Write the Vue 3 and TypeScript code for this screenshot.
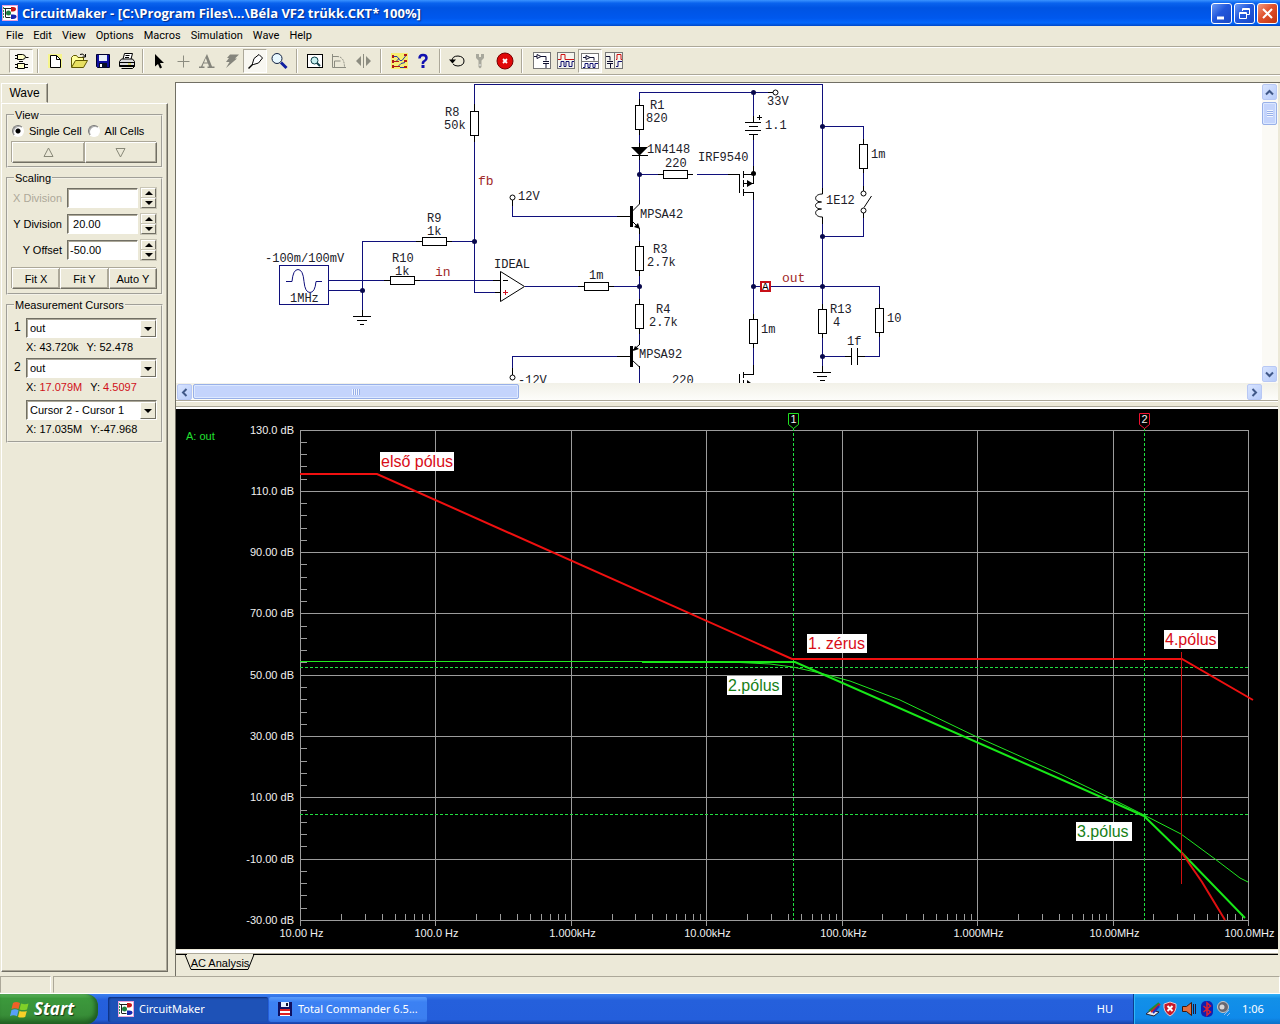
<script setup lang="ts">
import { ref } from 'vue'

interface ToolButton { name: string; title: string; pressed?: boolean }
interface Label { x: number; y: number; text: string }

const menus = ['File', 'Edit', 'View', 'Options', 'Macros', 'Simulation', 'Wave', 'Help']

const logo = `<rect x="0.5" y="0.5" width="15" height="15" fill="#fff" stroke="#e9a0d8"/>
<path d="M1 3.500h8M3.500 3v9M3.500 12.500h5" stroke="#222" fill="none"/>
<path d="M1.500 2v12" stroke="#28a060" stroke-dasharray="2 1"/>
<path d="M9 2h2q3 0 3 2t-3 2.500h-2z" fill="#c81818"/><circle cx="6.500" cy="8" r="2.500" fill="#208040"/>
<path d="M9 9.500h2q3.500 0 3.500 2t-3.500 2.500h-2z" fill="#1828b0"/>`

const icons: Record<string, string> = {
  gates: `<path d="M6.500 3.500h5q3 .5 3 2.500t-3 2.500h-5zM6.500 12.500h7v5h-7z" fill="#ffffc8" stroke="#000"/><path d="M4 4.500h2M4 7.500h2M15 6.500h2.500M4 13.500h2M4 16.500h2M14 13.500h3M14 16.500h3M8 10.500h4" stroke="#000"/>`,
  newFile: `<rect x="3" y="3" width="14" height="14" fill="#ffff50" opacity=".55"/><path d="M5.500 4.500h6l4 4v8h-10z" fill="#fff" stroke="#000"/><path d="M11.500 4.500v4h4" fill="none" stroke="#000"/>`,
  open: `<path d="M2.500 16V6.500l2-2h3l1.500 2h5.500v3" fill="#ffff9c" stroke="#605800"/><path d="M2.500 16.500l4-7h12l-4 7z" fill="#e8e060" stroke="#605800"/><path d="M11 3.500q3-2 5 2M16.500 3v3h-3" fill="none" stroke="#000"/>`,
  save: `<path d="M3.500 3.500h13v13h-12l-1-1z" fill="#1010a0" stroke="#000030"/><rect x="6" y="4" width="8" height="6" fill="#e8f0f8"/><rect x="6" y="12" width="8" height="4.500" fill="#081028"/><rect x="7" y="13" width="2" height="3" fill="#fff"/>`,
  print: `<path d="M6 8l1.500-5.500h8L14 8" fill="#fff" stroke="#000"/><path d="M8.500 4.500h4M8 6.500h4" stroke="#000"/><path d="M2.500 10.500l2-2.500h11l2 2.500v5h-15z" fill="#ddd" stroke="#000"/><path d="M2.500 11.500h15M3 14.500h14M4.500 17.500h11l2-2" fill="none" stroke="#000"/><path d="M11 13h3" stroke="#c8c800"/>`,
  arrow: `<path d="M6 3v12.500l3-2.500 2 4.500 2-1-2-4.500h4z" fill="#000"/>`,
  plus: `<path d="M10.500 4.500v12M4.500 10.500h12" stroke="#8c8c80"/>`,
  text: `<path d="M10 3l5 12.500h2.500v1.500h-7v-1.500h1.500l-1-3H6.500l-1 3h2v1.500H2v-1.500h2L9 5zM7 11.500h3.500L8.800 7z" fill="#85857c"/>`,
  bolt: `<path d="M9 3.500h9l-4 4h2L5 17l3.500-6H5l3-4H6z" fill="#85857c"/>`,
  probe: `<path d="M3.500 17.500l5-5" stroke="#000" stroke-width="1.500"/><path d="M7.500 12.500l1.500-5 5-4 3.500 3.500-4 5-5 1.500z" fill="#fff" stroke="#000"/>`,
  zoom: `<circle cx="8" cy="7.500" r="5" fill="#e8f8ff" stroke="#102040"/><path d="M12 11.500l5.500 5.500" stroke="#1020a0" stroke-width="3"/>`,
  fit: `<rect x="2.500" y="3.500" width="15" height="13" fill="#fff" stroke="#000"/><circle cx="9.500" cy="9.500" r="3.500" fill="#c8f0f0" stroke="#104048"/><path d="M12 12l3 3" stroke="#104048" stroke-width="2"/>`,
  rotate: `<path d="M3.500 3v13.500H17M3 5.500h5M5.500 16v-6h6" fill="none" stroke="#8c8c80"/><path d="M8 5.500q7 0 7.500 10" fill="none" stroke="#8c8c80" stroke-dasharray="2 1"/>`,
  mirror: `<path d="M10.500 3v14" stroke="#8c8c80"/><path d="M8 5v10l-5-5zM13 5v10l5-5z" fill="#8c8c80"/>`,
  net: `<rect x="2" y="2" width="17" height="16" fill="#fff230" opacity=".6"/><path d="M3 5.500h5l3 4h2l4-5M3 10.500h4l3-3M3 15.500h6l3-3 4-1M11 16.500h6" fill="none" stroke="#2838a8"/><path d="M3 4h2v3H3zM3 9h2v3H3zM3 14h2v3H3zM15 3h3v2h-3zM15 9h3v2h-3zM15 15h3v2h-3z" fill="#b01818"/><path d="M5 10.500l5 0M5 15.500h6" stroke="#b01818"/>`,
  help: `<path d="M6.500 7.500q0-3.500 3.500-3.500t3.500 3q0 2-2 3t-1.500 3" fill="none" stroke="#1010b0" stroke-width="2.500"/><rect x="8.500" y="14" width="3" height="3" fill="#1010b0"/>`,
  reset: `<path d="M5 10q0-5 6-5 6 .5 6 5t-6 5q-3.500 0-5-2" fill="none" stroke="#000"/><path d="M2 8.500h7l-3.500 4z" fill="#000"/>`,
  wrench: `<path d="M5 3h3v3h2V3h3v4l-2.500 2.500V16l-1.500 1.500L7.500 16V9.500L5 7z" fill="#a8a89c"/><path d="M8 14h2" stroke="#eee"/>`,
  stop: `<circle cx="10" cy="10" r="8" fill="#e00808" stroke="#700"/><path d="M8 8l4 4M12 8l-4 4" stroke="#fff" stroke-width="1.800"/>`,
  winA: `<rect x="1.500" y="1.500" width="17" height="16" fill="#fff" stroke="#777"/><path d="M2 5.500h3v-2l4 2-4 2v-2M9 5.500h5v4M11 10.500h6M11 12.500h6M14 13v4" fill="none" stroke="#101030"/>`,
  winB: `<rect x="1.500" y="1.500" width="17" height="16" fill="#f4f4ee" stroke="#777"/><path d="M2 8.500h3v-5h4v5h9" fill="none" stroke="#d01010"/><path d="M3 15.500h2v-5h3v5h2v-5h3v5h3v-5h2" fill="none" stroke="#101070"/>`,
  winC: `<rect x="1.500" y="2.500" width="17" height="15" fill="#fff" stroke="#777"/><path d="M2 10.500h16" stroke="#777"/><path d="M3 6.500h3v-2l4 2-4 2v-2M10 6.500h4v3" fill="none" stroke="#101030"/><path d="M3 16.500h2v-4h3v4h2v-4h3v4h2v-4h3" fill="none" stroke="#101070"/>`,
  winD: `<rect x="1.500" y="1.500" width="17" height="16" fill="#f4f4ee" stroke="#777"/><path d="M10.500 2v15" stroke="#777"/><path d="M2 5.500h4v4M3 10.500h6M3 12.500h6M6.500 13v4" fill="none" stroke="#101030"/><path d="M12 8.500h1v-5h4v5h1" fill="none" stroke="#d01010"/><path d="M12 15.500h2v-5h4" fill="none" stroke="#101070"/>`,
}

const toolGroups: ToolButton[][] = [
  [{ name: 'gates', title: 'Parts', pressed: true }],
  [{ name: 'newFile', title: 'New' }, { name: 'open', title: 'Open' }, { name: 'save', title: 'Save' }, { name: 'print', title: 'Print' }],
  [{ name: 'arrow', title: 'Arrow' }, { name: 'plus', title: 'Wire' }, { name: 'text', title: 'Text' }, { name: 'bolt', title: 'Delete' }, { name: 'probe', title: 'Probe', pressed: true }, { name: 'zoom', title: 'Zoom' }],
  [{ name: 'fit', title: 'Fit to window' }, { name: 'rotate', title: 'Rotate' }, { name: 'mirror', title: 'Mirror' }],
  [{ name: 'net', title: 'Connections' }, { name: 'help', title: 'Help' }],
  [{ name: 'reset', title: 'Reset' }, { name: 'wrench', title: 'Setup' }, { name: 'stop', title: 'Stop' }],
  [{ name: 'winA', title: 'Schematic' }, { name: 'winB', title: 'Waves' }, { name: 'winC', title: 'Split horizontally', pressed: true }, { name: 'winD', title: 'Split vertically' }],
]

const cellMode = ref('single')
const xDivision = ref('')
const yDivision = ref(' 20.00')
const yOffset = ref('-50.00')

// Schematic
const wires = [
  'M474.500 104V84.500H822.500V188', 'M474.500 142V292.500H495', 'M416 241.500H362.500V310', 'M452 241.500H474',
  'M328 280.500H384', 'M420 280.500H493', 'M328 290.500H362', 'M525 286.500H578', 'M614 286.500H639',
  'M512.500 206V216.500H617', 'M617 356.500H512.500V368', 'M639.500 99V92.500H768', 'M639.500 135V143',
  'M639.500 160V200', 'M639.500 174.500H658', 'M639.500 234V241', 'M639.500 276V299', 'M639.500 334V340',
  'M639.500 369V383', 'M697 174.500H728', 'M753.500 92V116', 'M753.500 140V166', 'M753.500 200V314',
  'M753.500 348V365', 'M753 286.500H760', 'M771 286.500H879.500V304', 'M822.500 126.500H863.500V139',
  'M863.500 173V186', 'M863.500 218V236.500H822', 'M822.500 224V304', 'M822.500 338V366', 'M822 356.500H845',
  'M865 356.500H879.500V337', 'M279.500 265.500H328.500V304.500H279.500Z',
]
const leads = [
  'M474.500 104V111M474.500 135V142', 'M416 241.500H422M447 241.500H452', 'M384 280.500H390M415 280.500H420',
  'M493 280.500H500M495 292.500H500', 'M578 286.500H584M609 286.500H614', 'M512.500 200V206M512.500 368V375',
  'M617 216.500H631M617 356.500H631', 'M639.500 99V105M639.500 129V135M639.500 143V148M639.500 155V160',
  'M632 155.500H648', 'M658 174.500H663M688 174.500H693M728 174.500H740', 'M639.500 200V204M639.500 228V234M639.500 241V246M639.500 270V276',
  'M639.500 299V304M639.500 328V334M639.500 340V345M639.500 366V369', 'M768 92.500H773', 'M753.500 116V122M753.500 134V140M753.500 166V173',
  'M745 122.500H761M749 126.500H758M745 130.500H761M749 134.500H758M757 117.500H762M759.500 115V120',
  'M739.500 174V193M743.500 171V178M743.500 180V187M743.500 189V196M743 174.500H753.500V183.500H743M743 192.500H753.500V200',
  'M739.500 374V383M743.500 372V378M743.500 380V383M743 374.500H753.500V365', 'M753.500 314V319M753.500 343V348',
  'M863.500 139V144M863.500 168V173M863.500 186V191M863.500 213V218', 'M822.500 188V194M822.500 217V224',
  'M822.500 304V309M822.500 333V338M822.500 366V372', 'M879.500 304V308M879.500 332V337', 'M845 356.500H851M858 356.500H865',
  'M851.500 348V365M857.500 348V365', 'M353 316.500H371M357 320.500H367M360 324.500H364M362.500 310V316',
  'M813 372.500H831M817 376.500H827M820 380.500H825', 'M503 280.500H508',
]
const uprights = [[470, 111], [635, 105], [635, 246], [635, 304], [749, 319], [859, 144], [818, 309], [875, 308]]
const flats = [[422, 237], [390, 276], [584, 282], [663, 170]]
const dots = [[474.5, 241.5], [362.5, 290.5], [639.5, 174.5], [639.5, 286.5], [753.5, 92.5], [753.5, 286.5], [822.5, 126.5], [822.5, 236.5], [822.5, 286.5], [822.5, 356.5]]
const terminals = [[512.5, 197.5], [512.5, 377.5], [775.5, 92.5], [863.5, 193.5], [863.5, 210.5]]
const label = (x: number, y: number, text: string): Label => ({ x, y, text })
const partLabels: Label[] = [
  label(445, 116, 'R8'), label(444, 129, '50k'), label(518, 200, '12V'), label(427, 222, 'R9'), label(427, 235, '1k'),
  label(265, 262, '-100m/100mV'), label(392, 262, 'R10'), label(395, 275, '1k'), label(494, 268, 'IDEAL'), label(290, 302, '1MHz'),
  label(518, 384, '-12V'), label(650, 109, 'R1'), label(646, 122, '820'), label(647, 153, '1N4148'), label(665, 167, '220'),
  label(698, 161, 'IRF9540'), label(767, 105, '33V'), label(765, 129, '1.1'), label(871, 158, '1m'), label(640, 218, 'MPSA42'),
  label(826, 204, '1E12'), label(653, 253, 'R3'), label(647, 266, '2.7k'), label(589, 279, '1m'), label(656, 313, 'R4'),
  label(649, 326, '2.7k'), label(761, 333, '1m'), label(830, 313, 'R13'), label(833, 326, '4'), label(847, 345, '1f'),
  label(887, 322, '10'), label(639, 358, 'MPSA92'), label(672, 384, '220'),
]
const netLabels: Label[] = [label(478, 185, 'fb'), label(435, 276, 'in'), label(782, 282, 'out')]

// Bode plot: seven decades across, 20 dB per division
const left = 300.5
const right = 1248.5
const top = 430
const bottom = 920.5
const decade = (right - left) / 7
const division = (bottom - top) / 8
const xLabels = ['10.00 Hz', '100.0 Hz', '1.000kHz', '10.00kHz', '100.0kHz', '1.000MHz', '10.00MHz', '100.0MHz']
const yLabels = ['130.0 dB', '110.0 dB', '90.00 dB', '70.00 dB', '50.00 dB', '30.00 dB', '10.00 dB', '-10.00 dB', '-30.00 dB']
const xAt = (i: number) => Math.floor(left + i * decade) + 0.5
const yAt = (i: number) => Math.floor(top + i * division) + 0.5
const logTicks: number[] = []
for (let d = 0; d < 7; d++) for (let m = 2; m < 10; m++) logTicks.push(xAt(d + Math.log10(m)))
const dbTicks: number[] = []
for (let i = 1; i < 40; i++) if (i % 5) dbTicks.push(yAt(i / 5))
const notes = [
  { x: 380, y: 452, w: 74, text: 'első pólus', color: '#d80c18' },
  { x: 807, y: 634, w: 60, text: '1. zérus', color: '#d80c18' },
  { x: 1164, y: 630, w: 54, text: '4.pólus', color: '#d80c18' },
  { x: 727, y: 676, w: 55, text: '2.pólus', color: '#178017' },
  { x: 1076, y: 822, w: 56, text: '3.pólus', color: '#178017' },
]
</script>

<template>
  <div class="desktop">
    <header class="title-bar">
      <svg class="logo" width="16" height="16" v-html="logo"></svg>
      <h1>CircuitMaker - [C:\Program Files\...\Béla VF2 trükk.CKT* 100%]</h1>
      <div class="window-buttons">
        <button aria-label="Minimize"><svg width="19" height="19"><path d="M5 14h7" stroke="#fff" stroke-width="3" /></svg></button>
        <button aria-label="Restore"><svg width="19" height="19" fill="none" stroke="#fff"><path d="M7.500 7V4.500h7v6H12M7 5.500h8M4.500 8.500h7v6h-7zM4 9.500h8" /></svg></button>
        <button class="close" aria-label="Close"><svg width="19" height="19"><path d="M5 5l9 9M14 5l-9 9" stroke="#fff" stroke-width="2" /></svg></button>
      </div>
    </header>

    <nav class="menu-bar"><button v-for="m in menus" :key="m">{{ m }}</button></nav>

    <div class="toolbar" role="toolbar">
      <div v-for="(group, g) in toolGroups" :key="g" class="tool-group">
        <button v-for="t in group" :key="t.name" :title="t.title" :aria-label="t.title" :class="{ pressed: t.pressed }">
          <svg width="20" height="20" v-html="icons[t.name]"></svg>
        </button>
      </div>
    </div>

    <main class="workspace">
      <aside class="sidebar">
        <button class="side-tab">Wave</button>
        <div class="side-page">
          <fieldset class="view-box">
            <legend>View</legend>
            <div class="radio-row">
              <label><input v-model="cellMode" type="radio" name="cells" value="single">Single Cell</label>
              <label><input v-model="cellMode" type="radio" name="cells" value="all">All Cells</label>
            </div>
            <div class="button-row">
              <button aria-label="Previous cell"><svg width="11" height="11"><path d="M5.500 1L10 9.500H1z" fill="none" stroke="#888878" /></svg></button>
              <button aria-label="Next cell"><svg width="11" height="11"><path d="M5.500 10L10 1.500H1z" fill="none" stroke="#888878" /></svg></button>
            </div>
          </fieldset>

          <fieldset class="scaling-box">
            <legend>Scaling</legend>
            <div class="field-row">
              <label for="xdiv" class="disabled">X Division</label><input id="xdiv" v-model="xDivision" type="text">
              <span class="spinner"><button aria-label="Increase X division"><i class="up"></i></button><button aria-label="Decrease X division"><i class="down"></i></button></span>
            </div>
            <div class="field-row">
              <label for="ydiv">Y Division</label><input id="ydiv" v-model="yDivision" type="text">
              <span class="spinner"><button aria-label="Increase Y division"><i class="up"></i></button><button aria-label="Decrease Y division"><i class="down"></i></button></span>
            </div>
            <div class="field-row">
              <label for="yoff">Y Offset</label><input id="yoff" v-model="yOffset" type="text">
              <span class="spinner"><button aria-label="Increase Y offset"><i class="up"></i></button><button aria-label="Decrease Y offset"><i class="down"></i></button></span>
            </div>
            <div class="button-row"><button>Fit X</button><button>Fit Y</button><button>Auto Y</button></div>
          </fieldset>

          <fieldset class="cursor-box">
            <legend>Measurement Cursors</legend>
            <div class="cursor-row">
              <label for="c1">1</label>
              <span class="combo"><select id="c1"><option>out</option></select><b><i class="down"></i></b></span>
            </div>
            <p class="reading"><span>X: 43.720k</span><span>Y: 52.478</span></p>
            <div class="cursor-row">
              <label for="c2">2</label>
              <span class="combo"><select id="c2"><option>out</option></select><b><i class="down"></i></b></span>
            </div>
            <p class="reading"><span>X: <em>17.079M</em></span><span>Y: <em>4.5097</em></span></p>
            <div class="cursor-row difference">
              <label for="c3"></label>
              <span class="combo"><select id="c3" aria-label="Difference"><option>Cursor 2 - Cursor 1</option></select><b><i class="down"></i></b></span>
            </div>
            <p class="reading"><span>X: 17.035M</span><span>Y:-47.968</span></p>
          </fieldset>
        </div>
      </aside>

      <section class="documents">
        <div class="schematic">
          <svg class="canvas" width="100%" height="300" fill="none" shape-rendering="crispEdges">
            <g transform="translate(-176 -83)">
              <path v-for="w in wires" :key="w" :d="w" stroke="#10107c" />
              <path v-for="l in leads" :key="l" :d="l" stroke="#000" />
              <rect v-for="([x, y], i) in uprights" :key="'u' + i" :x="x + 0.5" :y="y + 0.5" width="8" height="24" fill="#fff" stroke="#000" />
              <rect v-for="([x, y], i) in flats" :key="'f' + i" :x="x + 0.5" :y="y + 0.5" width="24" height="8" fill="#fff" stroke="#000" />
              <g shape-rendering="auto">
                <circle v-for="([x, y], i) in dots" :key="'d' + i" :cx="x" :cy="y" r="2.5" fill="#08084c" />
                <circle v-for="([x, y], i) in terminals" :key="'t' + i" :cx="x" :cy="y" r="2.5" fill="#fff" stroke="#000" />
                <circle cx="753.5" cy="173.500" r="2.5" fill="#000" />
                <path d="M286 281.500h6q1-12 6-12t6 12q1 11 6 11t6-11h6" stroke="#10107c" />
                <path d="M500.500 271.500v30l24-15zM639.500 204l-7 7M632 221l7 7M639 345l-7 6M632 360l7.500 7M864 207.500l7.500-11.500" stroke="#000" />
                <path d="M822.500 194c-9 0-9 8-1 8c-8 0-8 7 0 7c-8 0-8 8 1 8" stroke="#000" />
                <path d="M631 147h17l-8.500 8.500zM640 229l-6-2 4-4zM633 351l2-5 4 3zM753 183.500l-6-3.500v7zM630 206h3v21h-3zM630 346h3v21h-3zM751 383l-4-3v3z" fill="#000" />
                <path d="M503 292.500h5M505.500 290v5" stroke="#d01020" />
                <rect x="761" y="282" width="9" height="9" fill="#fff" stroke="#c81018" stroke-width="2" />
              </g>
              <text x="762" y="290" class="probe-name">A</text>
              <text v-for="(p, i) in partLabels" :key="'p' + i" :x="p.x" :y="p.y" class="part">{{ p.text }}</text>
              <text v-for="n in netLabels" :key="n.text" :x="n.x" :y="n.y" class="net">{{ n.text }}</text>
            </g>
          </svg>
          <div class="v-scroll">
            <button aria-label="Scroll up"><svg width="9" height="7"><path d="M1 5.500L4.500 2 8 5.500" /></svg></button>
            <span class="thumb"><i></i></span>
            <button class="end" aria-label="Scroll down"><svg width="9" height="7"><path d="M1 1.500L4.500 5 8 1.500" /></svg></button>
          </div>
        </div>
        <div class="h-scroll">
          <button aria-label="Scroll left"><svg width="7" height="9"><path d="M5.500 1L2 4.500 5.500 8" /></svg></button>
          <span class="thumb"><i></i></span>
          <button class="end" aria-label="Scroll right"><svg width="7" height="9"><path d="M1.500 1L5 4.500 1.500 8" /></svg></button>
        </div>
        <div class="splitter"></div>

        <svg class="plot" viewBox="176 409 1102 540" fill="none">
          <g stroke="#9c9c9c" shape-rendering="crispEdges">
            <path v-for="(_, i) in xLabels" :key="'x' + i" :d="`M${xAt(i)} ${top}V${bottom + 5}`" />
            <path v-for="(_, i) in yLabels" :key="'y' + i" :d="`M${left} ${yAt(i)}H${right}`" />
            <path v-for="x in logTicks" :key="'l' + x" :d="`M${x} ${bottom - 7}V${bottom}`" />
            <path v-for="y in dbTicks" :key="'b' + y" :d="`M${left} ${y}h6`" />
          </g>
          <path d="M793.500 428V920M1144.500 428V920M300 667.500H1248M300 814.500H1248" stroke="#20e040" stroke-dasharray="3 2" shape-rendering="crispEdges" />
          <path d="M300 661.500H700L740 662.500 770 664 793 667 820 673 850 681 900 700 977 737 1060 774 1112 799 1144 815 1181 834 1215 859 1240 878 1248 882" stroke="#20e820" />
          <path d="M300 661.500H640" stroke="#20e820" />
          <path d="M642 662H795L1144 816" stroke="#18e818" stroke-width="2" />
          <path d="M1144 816L1182 853 1245 918" stroke="#18e818" stroke-width="2" />
          <path d="M300 474H377L792 659H1182L1253 700" stroke="#f01010" stroke-width="2" />
          <path d="M1182 853L1202 882 1225 920" stroke="#e01010" stroke-width="2" />
          <path d="M1181.500 652V884" stroke="#d01010" />
          <path d="M788.500 413.500h10v11l-5 4-5-4z" stroke="#20e020" fill="#000" />
          <path d="M1139.500 413.500h10v11l-5 4-5-4z" stroke="#f01030" fill="#000" />
          <g class="axis">
            <text x="793.5" y="423" text-anchor="middle">1</text>
            <text x="1144.5" y="423" text-anchor="middle">2</text>
            <text v-for="(t, i) in yLabels" :key="t" x="294" :y="yAt(i) + 3" text-anchor="end">{{ t }}</text>
            <text v-for="(t, i) in xLabels" :key="t" :x="xAt(i) + 1" y="937" text-anchor="middle">{{ t }}</text>
            <text x="186" y="440" class="signal">A: out</text>
          </g>
          <g v-for="n in notes" :key="n.text">
            <rect :x="n.x" :y="n.y" :width="n.w" height="19" fill="#fff" />
            <text :x="n.x + 1" :y="n.y + 15" class="note" :fill="n.color">{{ n.text }}</text>
          </g>
        </svg>

        <div class="sheet-tabs">
          <button>
            <svg width="72" height="17" fill="none"><path d="M3 0h66" stroke="#ece9d8" stroke-width="2" /><path d="M1 .5l6 15h57l6-15" stroke="#000" /></svg>
            <span>AC Analysis</span>
          </button>
        </div>
      </section>
    </main>

    <footer class="status-bar"><span></span><span></span></footer>

    <footer class="taskbar">
      <button class="start">
        <svg width="20" height="20"><path d="M3 4q3-2 7 0l-1.500 6q-4-1.500-7 0z" fill="#f06028" /><path d="M11 4.500q4 1.500 7.500 0L17 10.500q-4 1-7.500 0z" fill="#80d028" /><path d="M1.500 11q4-1.500 7 .3L7 17.300q-4-2-7 0z" fill="#58a0f8" /><path d="M9.500 12q4 1 7.300 0l-1.600 6q-4 1-7.200 0z" fill="#f8d028" /></svg>
        <span>Start</span>
      </button>
      <button class="task active"><svg width="16" height="16" v-html="logo"></svg>CircuitMaker</button>
      <button class="task"><svg width="16" height="16"><path d="M1 1h14v14H1z" fill="#101060" /><path d="M4 1h8v5H4z" fill="#e8f0ff" /><path d="M9 2h2v3H9z" fill="#101030" /><path d="M3 8h10v7H3z" fill="#fff" /><path d="M3 9h10M3 13h10" stroke="#e02020" stroke-width="2" /></svg>Total Commander 6.5...</button>
      <span class="language">HU</span>
      <div class="tray">
        <svg width="86" height="18">
          <path d="M1 14l5-4 8 2-5 4z" fill="#e8e8f0" stroke="#223" /><path d="M4 11L14 3" stroke="#209030" stroke-width="2" /><path d="M6 12l9-8" stroke="#d02020" stroke-width="2" /><path d="M8 13l6-7" stroke="#2030c0" stroke-width="2" />
          <path d="M19 4l6-2 6 2q1 8-6 12-7-4-6-12z" fill="#c81828" stroke="#e8c8d0" /><path d="M22.500 6l5 5M27.500 6l-5 5" stroke="#fff" stroke-width="2" />
          <path d="M37.500 6.500h4l5-4v13l-5-4h-4z" fill="#e07040" stroke="#401808" /><path d="M48.500 4v10M50.500 4v10" stroke="#201838" />
          <rect x="56" y="1" width="12" height="16" rx="5" fill="#1020b0" /><path d="M58.500 6l7 6-3.500 3V3l3.500 3-7 6" fill="none" stroke="#e02030" stroke-width="1.500" />
          <circle cx="78" cy="7" r="5.500" fill="#686870" stroke="#c8c8c8" /><circle cx="77" cy="7" r="2.500" fill="#d8d8d8" /><path d="M79 15l5-5M82 16l3-3" stroke="#90b8f0" />
        </svg>
        <time>1:06</time>
      </div>
    </footer>
  </div>
</template>

<style>
body { margin: 0; background: #ece9d8; }
</style>

<style scoped>
* { box-sizing: border-box; }
.desktop { display: flex; flex-direction: column; min-height: 100vh; background: #ece9d8; color: #000; font: 11px/14px "Liberation Sans", Arial, sans-serif; }
button { margin: 0; padding: 0; border: 0; background: none; color: inherit; font: inherit; display: flex; align-items: center; justify-content: center; }
svg { display: block; flex: none; }

.title-bar { display: flex; align-items: center; height: 26px; padding: 0 2px; background: linear-gradient(#3a93ff 0, #0a63ee 12%, #0054e3 30%, #0058ee 70%, #0468fc 88%, #0048c8 100%); }
.title-bar h1 { flex: 1; margin: 0 0 0 4px; font: 700 13px/20px "Open Sans", sans-serif; color: #fff; text-shadow: 1px 1px 1px #0a2a80; white-space: nowrap; }
.window-buttons { display: flex; gap: 2px; }
.window-buttons button { width: 21px; height: 21px; border: 1px solid #fff; border-radius: 3px; background: linear-gradient(135deg, #6c9bf5, #2258dc 45%, #1a48c4); }
.window-buttons .close { background: linear-gradient(135deg, #f09a80, #e0512c 45%, #c03410); }

.menu-bar { display: flex; gap: 10px; height: 20px; padding: 1px 6px; font: 11px/16px Roboto, sans-serif; }
.menu-bar button { height: 18px; }

.toolbar { display: flex; height: 29px; padding: 2px 9px 1px; border-top: 1px solid #aca899; border-bottom: 1px solid #aca899; box-shadow: inset 0 1px #fff, 0 1px #fff; }
.tool-group { display: flex; }
.tool-group + .tool-group::before { content: ""; width: 0; margin: 0 4px; border-left: 1px solid #aca899; border-right: 1px solid #fff; }
.tool-group:nth-child(3)::before { margin: 0 3px; }
.tool-group:nth-child(4)::before, .tool-group:nth-child(5)::before { margin: 0 5px; }
.tool-group:last-child::before { margin: 0 7px 0 4px; }
.tool-group button { width: 24px; height: 24px; }
.tool-group .pressed { background: #f8f7f1; border: 1px solid; border-color: #aca899 #fff #fff #aca899; }

.workspace { display: flex; flex: 1; padding-top: 7px; }
.sidebar { display: flex; flex-direction: column; width: 175px; flex: none; padding: 1px 7px 4px 1px; }
.side-tab { width: 47px; height: 20px; border: 1px solid; border-color: #fff #716f64 transparent #fff; font-size: 12px; box-shadow: inset -1px 0 #aca899; }
.side-page { flex: 1; display: flex; flex-direction: column; gap: 4px; padding: 5px 4px; border: 1px solid; border-color: #fff #716f64 #716f64 #fff; box-shadow: inset -1px -1px #aca899; }
fieldset { min-width: 0; margin: 0; border: 2px groove #f4f2e8; padding: 3px 4px; }
legend { margin: 0; padding: 0 1px; line-height: 12px; margin-left: 2px; }
.radio-row { display: flex; gap: 6px; height: 14px; margin-bottom: 4px; white-space: nowrap; }
.radio-row label { display: flex; align-items: center; gap: 5px; }
input[type="radio"] { appearance: none; width: 12px; height: 12px; margin: 0; border: 1px solid; border-color: #777 #fff #fff #777; border-radius: 50%; background: #fff; box-shadow: inset 1px 1px #aaa; }
input[type="radio"]:checked { background: radial-gradient(circle, #000 2px, #fff 3px); }
.button-row { display: flex; height: 21px; }
.button-row button { flex: 1; border: 1px solid; border-color: #fff #716f64 #716f64 #fff; box-shadow: inset -1px -1px #aca899, -1px -1px #aca899; }
.scaling-box { padding: 4px; }
.field-row { display: flex; align-items: center; height: 20px; margin-bottom: 6px; }
.field-row:nth-last-child(2) { margin-bottom: 8px; }
.field-row label { width: 55px; padding-right: 5px; text-align: right; white-space: nowrap; }
.disabled { color: #aca899; }
.field-row input { width: 71px; height: 20px; margin: 0 3px 0 0; padding: 0 2px; border: 1px solid; border-color: #716f64 #fff #fff #716f64; box-shadow: inset 1px 1px #aca899; font: inherit; background: #fff; border-radius: 0; }
.spinner { display: flex; flex-direction: column; width: 15px; height: 20px; }
.spinner button { flex: 1; border: 1px solid; border-color: #fff #716f64 #716f64 #fff; box-shadow: 0 0 0 1px #c8c5b5; }
.up, .down { width: 0; height: 0; border: 4px solid transparent; border-top-width: 0; border-bottom: 4px solid #000; }
.down { border-top: 4px solid #000; border-bottom-width: 0; }
.cursor-box { padding: 7px 4px 3px; }
.cursor-row { display: flex; height: 20px; }
.cursor-row label { width: 14px; padding: 2px; font-size: 12px; }
.combo { position: relative; display: flex; flex: 1; }
.combo select { appearance: none; width: 100%; height: 20px; padding: 0 3px; border: 1px solid; border-color: #716f64 #fff #fff #716f64; box-shadow: inset 1px 1px #aca899; border-radius: 0; background: #fff; color: #000; font: inherit; }
.combo b { position: absolute; top: 2px; right: 1px; display: flex; align-items: center; justify-content: center; width: 16px; height: 17px; background: #ece9d8; border: 1px solid; border-color: #fff #716f64 #716f64 #fff; pointer-events: none; }
.reading { display: flex; gap: 8px; height: 18px; margin: 0 0 2px 14px; line-height: 19px; white-space: nowrap; }
.reading em { font-style: normal; color: #d01018; }
.difference { margin-top: 4px; }
.reading:last-child { margin-bottom: 0; }

.documents { flex: 1; min-width: 0; padding-right: 2px; border-top: 1px solid #716f64; border-left: 1px solid #716f64; display: flex; flex-direction: column; }
.schematic { display: flex; background: #fff; }
.canvas { flex: 1; min-width: 0; overflow: hidden; }
.part, .net { font: 12px "Liberation Mono", monospace; fill: #202028; }
.net { font-size: 13px; fill: #a02828; }
.probe-name { font: 11px "Liberation Mono", monospace; fill: #000; }
.v-scroll, .h-scroll { display: flex; background: #fbfaf5; }
.v-scroll { flex-direction: column; width: 16px; padding: 1px 0; }
.h-scroll { height: 17px; padding: 1px 16px 0 1px; background: linear-gradient(#f2f1e8, #fdfdfa); }
.v-scroll button, .h-scroll button { width: 15px; height: 16px; border: 1px solid #b8c8f4; border-radius: 2px; background: linear-gradient(135deg, #d8e4ff, #b8ccfa); flex: none; }
.v-scroll path, .h-scroll path { fill: none; stroke: #405888; stroke-width: 2; }
.thumb { display: flex; align-items: center; justify-content: center; border: 1px solid #98b0e8; border-radius: 2px; background: #c4d4fc; box-shadow: inset 0 0 0 1px #dce8ff; }
.v-scroll .thumb { width: 15px; height: 23px; margin-top: 2px; }
.h-scroll .thumb { width: 30%; height: 15px; margin-left: 1px; }
.v-scroll i { width: 6px; height: 7px; background: repeating-linear-gradient(#f0f5ff 0 1px, #98b0e8 1px 2px); }
.h-scroll i { width: 8px; height: 6px; background: repeating-linear-gradient(90deg, #f0f5ff 0 1px, #98b0e8 1px 2px); }
.v-scroll .end { margin-top: auto; }
.h-scroll .end { margin-left: auto; }
.splitter { height: 9px; border-top: 1px solid #aca899; background: linear-gradient(#fff 0 1px, #ece9d8 1px 5px, #aca899 5px 6px, #fff 6px); }
.plot { width: 100%; height: auto; background: #000; }
.axis { font: 11px "Liberation Sans", Arial, sans-serif; fill: #f0f0f0; }
.signal { fill: #20e030; }
.note { font: 16px "Liberation Sans", Arial, sans-serif; }
.sheet-tabs { flex: 1; min-height: 27px; padding: 0 8px; background: linear-gradient(#ece9d8 0 1px, #fff 1px 4px, #aca899 4px 5px, #000 5px 6px, #ece9d8 6px); }
.sheet-tabs button { position: relative; width: 72px; height: 17px; margin-top: 5px; }
.sheet-tabs svg { position: absolute; top: 0; left: 0; }
.sheet-tabs span { position: relative; white-space: nowrap; }

.status-bar { display: flex; gap: 2px; height: 18px; border-bottom: 1px solid #fff; }
.status-bar span { width: 51px; border: 1px solid; border-color: #aca899 #fff transparent #aca899; }
.status-bar span:last-child { flex: 1; }

.taskbar { display: flex; align-items: center; height: 30px; background: linear-gradient(#3a80f0 0, #3474e8 8%, #2560dc 20%, #245edb 85%, #1941a5 100%); color: #fff; font: 11px/14px "Noto Sans", sans-serif; }
.start { width: 98px; height: 30px; gap: 4px; padding-right: 14px; border-radius: 0 12px 12px 0; background: linear-gradient(#5cb45c 0, #3c993c 15%, #388e38 70%, #286f28 100%); box-shadow: inset -3px -2px 4px #1f5c22; font: italic bold 17px/20px "Open Sans", sans-serif; text-shadow: 1px 1px 1px #143c14; }
.task { justify-content: flex-start; gap: 5px; width: 158px; height: 25px; padding: 0 8px; border-radius: 2px; background: linear-gradient(#5a9cfa, #3c81f3 20%, #3c7ff0 85%, #3070e0); white-space: nowrap; }
.task.active { width: 160px; margin: 0 1px 0 10px; padding: 0 10px; background: #1e52b7; box-shadow: inset 1px 1px 2px #0c2c78; }
.language { margin-left: auto; padding-right: 20px; }
.tray { display: flex; align-items: center; gap: 11px; width: 147px; height: 30px; padding-left: 11px; border-left: 1px solid #0c3c90; background: linear-gradient(#30b0f8 0, #1290e8 15%, #0f8aea 80%, #0d70c8 100%); box-shadow: inset 1px 0 #30b8f8; }
</style>
